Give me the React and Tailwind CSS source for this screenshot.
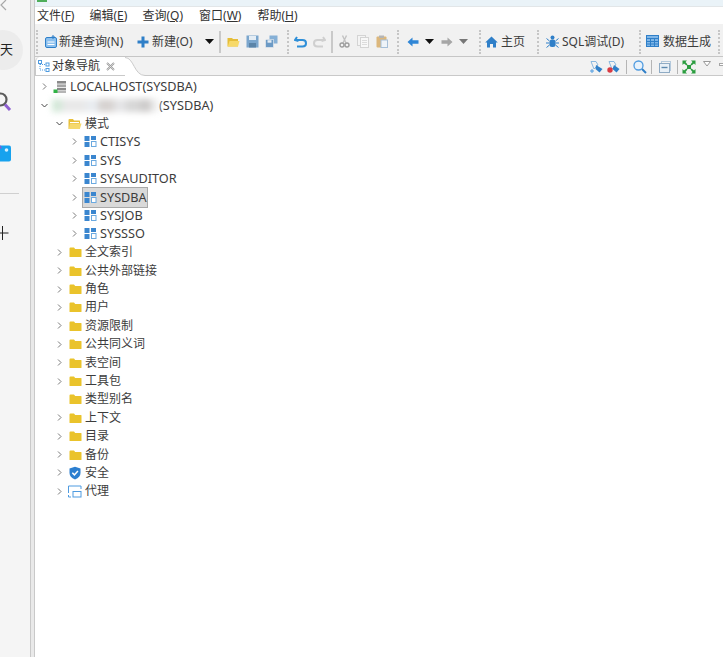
const F = ({ w = 14, h = 14, vb, children, cls = "" }) => (
  <svg width={w} height={h} viewBox={vb || `0 0 ${w} ${h}`} className={`shrink-0 ${cls}`}>{children}</svg>
);

const Chevron = ({ open }) => (
  <svg width="7" height="7" viewBox="0 0 7 7" className="shrink-0" fill="none" stroke="#7a7a7a" strokeWidth="1">
    {open ? <path d="M0.5 2 L3.5 5 L6.5 2" stroke="#444" /> : <path d="M2 0.5 L5 3.5 L2 6.5" />}
  </svg>
);

const Folder = () => (
  <F w={13} h={12}>
    <path d="M0.5 2.5 Q0.5 1.5 1.5 1.5 H5 L6.2 3 H12 Q12.5 3 12.5 3.5 V10.5 Q12.5 11 12 11 H1 Q0.5 11 0.5 10.5Z" fill="#eac32b" />
  </F>
);
const FolderOpen = () => (
  <F w={14} h={12}>
    <path d="M0.5 2 Q0.5 1 1.5 1 H5 L6 2.5 H11.5 Q12 2.5 12 3 V11 H1 Q0.5 11 0.5 10.5Z" fill="#e8bf3a" />
    <path d="M2 4 H11 V5 H2Z" fill="#fff" />
    <path d="M2 5.5 H13.5 L11.8 11 H0.8Z" fill="#f5d96e" />
  </F>
);
const Schema = () => (
  <F w={13} h={13}>
    <rect x="0.5" y="1" width="5" height="5" fill="#3a86cf" />
    <rect x="0.5" y="7" width="5" height="5" fill="#3a86cf" />
    <rect x="7" y="1" width="5" height="4" fill="#3a86cf" />
    <rect x="7.5" y="6.5" width="4.5" height="5" fill="#fff" stroke="#6aa9e0" />
  </F>
);
const Server = () => (
  <F w={14} h={14}>
    <rect x="4" y="1" width="9" height="2.6" fill="#8a8a8a" />
    <rect x="4" y="4.4" width="9" height="2.6" fill="#a5a5a5" />
    <rect x="4" y="7.8" width="9" height="2.6" fill="#8a8a8a" />
    <rect x="4" y="11" width="9" height="2" fill="#b5b5b5" />
    <rect x="0.5" y="9.5" width="4" height="3.5" fill="#2fb344" />
  </F>
);
const Shield = () => (
  <F w={12} h={14}>
    <path d="M6 0.8 L11.5 2.5 V7 Q11.5 11 6 13.5 Q0.5 11 0.5 7 V2.5Z" fill="#2c7fd0" />
    <path d="M3.3 6.8 L5.4 8.9 L8.9 4.9" fill="none" stroke="#fff" strokeWidth="1.5" />
  </F>
);
const Proxy = () => (
  <F w={14} h={13}>
    <path d="M0.5 8 V1 H13 V4" fill="none" stroke="#4f9be0" />
    <path d="M0.5 10 V12 H3" fill="none" stroke="#4f9be0" />
    <rect x="5" y="6.5" width="8" height="5.5" fill="#fff" stroke="#4f9be0" />
  </F>
);

const rows = [
  { icon: <Folder />, t: "全文索引" },
  { icon: <Folder />, t: "公共外部链接" },
  { icon: <Folder />, t: "角色" },
  { icon: <Folder />, t: "用户" },
  { icon: <Folder />, t: "资源限制" },
  { icon: <Folder />, t: "公共同义词" },
  { icon: <Folder />, t: "表空间" },
  { icon: <Folder />, t: "工具包" },
  { icon: <Folder />, t: "类型别名", noArrow: true },
  { icon: <Folder />, t: "上下文" },
  { icon: <Folder />, t: "目录" },
  { icon: <Folder />, t: "备份" },
  { icon: <Shield />, t: "安全" },
  { icon: <Proxy />, t: "代理" },
];

const Row = ({ pad, open, icon, noArrow, children }) => (
  <div className={`flex h-[18.4px] items-center ${pad}`}>
    <span className="flex w-[9px] shrink-0 justify-center">{!noArrow && <Chevron open={open} />}</span>
    <span className="relative z-10 ml-[4px] flex w-[14px] shrink-0 items-center justify-center">{icon}</span>
    {children}
  </div>
);

const Grip = ({ ml }) => <div className={`h-[24px] w-px shrink-0 border-l-2 border-dotted border-[#c6c6c6] ${ml}`} />;
const Sep = ({ ml }) => <div className={`h-[22px] w-[2px] shrink-0 bg-[#c9c9c9] ${ml}`} />;
const Drop = ({ ml, c = "#111" }) => (
  <svg width="9" height="5" viewBox="0 0 9 5" className={`shrink-0 ${ml}`}><path d="M0 0 H9 L4.5 5Z" fill={c} /></svg>
);

const Menu = ({ ml, t, k }) => (
  <span className={`${ml} whitespace-nowrap`}>
    {t}(<span className="underline underline-offset-1">{k}</span>)
  </span>
);

export default function App() {
  return (
    <div className="flex h-[657px] w-[723px] overflow-hidden bg-white font-['Noto_Sans','Noto_Sans_CJK_SC',sans-serif] text-[12px] text-[#3c3c3c]">
      {/* left app strip */}
      <div className="flex w-[30px] shrink-0 flex-col overflow-hidden bg-[#f5f5f5]">
        <svg width="10" height="12" viewBox="0 0 10 12" className="shrink-0" fill="none" stroke="#a8a8a8" strokeWidth="1.2">
          <path d="M6 0 L1 5 L6 10" />
        </svg>
        <div className="-ml-[17px] mt-[18px] flex h-[40px] w-[40px] shrink-0 items-center justify-end rounded-full bg-[#ececec] pr-[10px] text-[13px] text-[#222]">天</div>
        <svg width="16" height="22" viewBox="0 0 16 22" className="-ml-[3px] mt-[22px] shrink-0" fill="none">
          <circle cx="3.5" cy="7.5" r="6" stroke="#5b5b5b" strokeWidth="2.2" />
          <path d="M8 12.5 L13 18" stroke="#8e5fd0" strokeWidth="3" />
        </svg>
        <svg width="12" height="17" viewBox="0 0 12 17" className="mt-[31px] shrink-0">
          <rect x="-6" y="0.5" width="17" height="16" rx="2" fill="#17a2ee" />
          <circle cx="6.5" cy="5" r="1.8" fill="#d5efff" />
          <path d="M-6 1 L0 0 L2 3 L-6 6Z" fill="#7e5fd8" />
        </svg>
        <div className="mt-[31px] h-px w-[19px] shrink-0 bg-[#d0d0d0]" />
        <svg width="10" height="14" viewBox="0 0 10 14" className="mt-[32px] shrink-0" fill="none" stroke="#222">
          <path d="M0 7 H8.5 M2.5 0 V14" />
        </svg>
      </div>
      <div className="w-[5px] shrink-0 border-x border-x-[#c9c9c9] bg-[#e9e9e9]" />

      {/* main */}
      <div className="flex min-w-0 flex-1 flex-col">
        <div className="h-[7px] shrink-0 border-b border-[#e2e6e8] bg-[#eaf3f8]">
          <div className="ml-[2px] h-[2px] w-[10px] bg-[#4fae5a]" />
        </div>
        {/* menu */}
        <div className="flex h-[17px] shrink-0 items-center bg-white pl-[2px] text-[12px] leading-none text-[#333]">
          <Menu t="文件" k="F" />
          <Menu ml="ml-[15px]" t="编辑" k="E" />
          <Menu ml="ml-[15px]" t="查询" k="Q" />
          <Menu ml="ml-[16px]" t="窗口" k="W" />
          <Menu ml="ml-[16px]" t="帮助" k="H" />
        </div>
        {/* toolbar */}
        <div className="flex h-[33px] shrink-0 items-center overflow-hidden border-b border-[#c6c6c6] bg-[#f1f1f1] pl-[1px] pt-[3px] whitespace-nowrap">
          <Grip />
          <F w={12} h={13} cls="ml-[7px]">
            <rect x="0.5" y="2.5" width="11" height="10" rx="1.5" fill="#8cc0ee" stroke="#2f7fc8" />
            <path d="M8 0 V4 M6.5 2 H10" stroke="#2f7fc8" />
            <path d="M2.5 7 H9.5 M2.5 9.5 H9.5" stroke="#fff" />
          </F>
          <span className="ml-[2px] w-[65px]">新建查询(N)</span>
          <F w={12} h={12} cls="ml-[13px]">
            <path d="M6 0.5 V11.5 M0.5 6 H11.5" stroke="#2f7fc8" strokeWidth="3" />
          </F>
          <span className="ml-[3px] w-[42px]">新建(O)</span>
          <Drop ml="ml-[11px]" />
          <Sep ml="ml-[5px]" />
          <F w={13} h={12} cls="ml-[6px]">
            <path d="M0.5 2 H5 L6 3 H11 V10.5 H0.5Z" fill="#e5bd38" />
            <path d="M2.5 5 H12.5 L11 10.5 H0.8Z" fill="#f7d968" />
          </F>
          <F w={13} h={13} cls="ml-[6px]">
            <rect x="0.5" y="0.5" width="12" height="12" fill="#7ba6cd" />
            <rect x="3" y="1" width="7" height="4" fill="#e4edf5" />
            <rect x="3" y="8" width="7" height="4.5" fill="#5b84a8" />
          </F>
          <F w={13} h={13} cls="ml-[6px]">
            <rect x="4.5" y="0.5" width="8" height="8" fill="#86b0d6" />
            <rect x="0.5" y="4.5" width="8" height="8" fill="#6c9ac5" stroke="#f1f1f1" strokeWidth="0.6" />
            <rect x="2.5" y="5.2" width="4" height="2.5" fill="#e4edf5" />
          </F>
          <Grip ml="ml-[9px]" />
          <F w={13} h={12} cls="ml-[5px]">
            <path d="M3 1 L1 4 L4.5 5 M1.5 4 H8.5 Q12 4 12 7.2 Q12 10.5 8.5 10.5 H3" fill="none" stroke="#2f8fd8" strokeWidth="2" />
          </F>
          <F w={13} h={12} cls="ml-[6px]">
            <path d="M10 1 L12 4 L8.5 5 M11.5 4 H4.5 Q1 4 1 7.2 Q1 10.5 4.5 10.5 H10" fill="none" stroke="#cfcfcf" strokeWidth="2" />
          </F>
          <Sep ml="ml-[5px]" />
          <F w={11} h={13} cls="ml-[6px]">
            <path d="M7.5 0.5 L4 8 M3.5 0.5 L7 8" stroke="#c2c2c2" strokeWidth="1.4" />
            <circle cx="3" cy="10" r="2" fill="none" stroke="#9d9d9d" strokeWidth="1.4" />
            <circle cx="8" cy="10" r="2" fill="none" stroke="#9d9d9d" strokeWidth="1.4" />
          </F>
          <F w={12} h={13} cls="ml-[7px]">
            <rect x="0.5" y="0.5" width="8" height="10" fill="#f4f4f4" stroke="#d4d4d4" />
            <rect x="3.5" y="2.5" width="8" height="10" fill="#f8f8f8" stroke="#d4d4d4" />
            <path d="M5 5.5 H10 M5 7.5 H10 M5 9.5 H10" stroke="#dcdcdc" />
          </F>
          <F w={12} h={13} cls="ml-[7px]">
            <rect x="0.5" y="1.5" width="10" height="11" rx="1" fill="#dcb77c" />
            <rect x="3" y="0.5" width="5" height="2.5" fill="#b5b5b5" />
            <rect x="5" y="5" width="6.5" height="7.5" fill="#eef3f8" stroke="#a6bfd8" />
          </F>
          <Grip ml="ml-[9px]" />
          <F w={12} h={10} cls="ml-[8px]">
            <path d="M5.5 0.5 L0.5 5 L5.5 9.5 V6.8 H11.5 V3.2 H5.5Z" fill="#2f86d6" />
          </F>
          <Drop ml="ml-[6px]" />
          <F w={12} h={10} cls="ml-[7px]">
            <path d="M6.5 0.5 L11.5 5 L6.5 9.5 V6.8 H0.5 V3.2 H6.5Z" fill="#a6a6a6" />
          </F>
          <Drop ml="ml-[6px]" c="#777" />
          <Grip ml="ml-[11px]" />
          <F w={13} h={12} cls="ml-[4px]">
            <path d="M6.5 0.5 L12.8 6.5 H11 V11.5 H8 V8 H5 V11.5 H2 V6.5 H0.2Z" fill="#2f7fc8" />
          </F>
          <span className="ml-[3px] w-[24px]">主页</span>
          <Grip ml="ml-[12px]" />
          <F w={13} h={13} cls="ml-[7px]">
            <circle cx="6.5" cy="2.5" r="2" fill="#2f7fc8" />
            <rect x="3.5" y="4.5" width="6" height="7.5" rx="2.5" fill="#2f7fc8" />
            <path d="M0.5 3.5 L3.5 6 M12.5 3.5 L9.5 6 M0 8 H3.5 M13 8 H9.5 M0.5 12.5 L3.5 10 M12.5 12.5 L9.5 10" stroke="#2f7fc8" />
          </F>
          <span className="ml-[3px] w-[65px]">SQL调试(D)</span>
          <Grip ml="ml-[12px]" />
          <F w={13} h={13} cls="ml-[5px]">
            <rect x="0.5" y="0.5" width="12" height="11" fill="#7fb6e8" stroke="#2f7fc8" />
            <path d="M0.5 3.5 H12.5 M0.5 6.5 H12.5 M0.5 9 H12.5 M4.5 3.5 V11.5 M8.5 3.5 V11.5" stroke="#2f7fc8" />
          </F>
          <span className="ml-[4px] w-[48px]">数据生成</span>
          <Grip ml="ml-[7px]" />
        </div>
        {/* view tab bar */}
        <div className="flex h-[19px] shrink-0 items-stretch justify-between border-b border-[#c9c9c9] bg-[#f2f2f2]">
          <div className="relative flex w-[90px] items-center rounded-tl-[5px] border-l border-[#c9c9c9] bg-white pl-[2px]">
            <F w={12} h={12}>
              <rect x="0.5" y="0.5" width="3" height="3" fill="none" stroke="#4f9be0" />
              <rect x="8" y="3" width="3" height="3" fill="none" stroke="#4f9be0" />
              <rect x="8" y="8.5" width="3" height="3" fill="none" stroke="#4f9be0" />
              <path d="M2 4 V10 H8 M2 4.5 H8" fill="none" stroke="#4f9be0" strokeDasharray="1 1" />
            </F>
            <span className="ml-[2px] text-[12px] text-[#333]">对象导航</span>
            <F w={9} h={9} cls="ml-[6px]">
              <path d="M1 1 L8 8 M8 1 L1 8" stroke="#9a9a9a" strokeWidth="1.8" />
              <path d="M1 1 L8 8 M8 1 L1 8" stroke="#f2f2f2" strokeWidth="0.6" />
            </F>
            <svg width="20" height="19" viewBox="0 0 20 19" className="absolute -right-[20px] top-0">
              <path d="M0 0 C9 0 9 18 20 18 V19 H0Z" fill="#fff" />
              <path d="M0 0.5 C9 0.5 9 18.5 20 18.5" fill="none" stroke="#c9c9c9" />
            </svg>
          </div>
          <div className="-mr-[3px] flex items-center overflow-hidden pt-px">
            <F w={13} h={13}>
              <path d="M1 1.5 H6 L8 5 L4 9 Z" fill="none" stroke="#8ab8df" />
              <path d="M6 5 L12.5 9 L9.5 12.5 L5.5 9Z" fill="#2f7fc8" />
              <path d="M0 11 H4 M2 9 V13" stroke="#4f9be0" />
            </F>
            <F w={13} h={13} cls="ml-[4px]">
              <path d="M2 1.5 H7 L9 5 L5 9 Z" fill="none" stroke="#8ab8df" />
              <path d="M7 5 L12.5 9 L9.5 12.5 L5.5 9Z" fill="#2f7fc8" />
              <circle cx="3" cy="10" r="2.7" fill="#d93a42" />
            </F>
            <div className="ml-[6px] h-[14px] w-px bg-[#b5b5b5]" />
            <F w={14} h={14} cls="ml-[6px]">
              <circle cx="5.5" cy="5.5" r="4.5" fill="#e8f2fb" stroke="#4f9be0" strokeWidth="1.3" />
              <path d="M9 9 L13 13" stroke="#2f7fc8" strokeWidth="2" />
            </F>
            <div className="ml-[4px] h-[14px] w-px bg-[#b5b5b5]" />
            <F w={12} h={12} cls="ml-[7px]">
              <rect x="2.5" y="0.5" width="9" height="9" fill="none" stroke="#b4c9dc" />
              <rect x="0.5" y="2.5" width="10" height="9" fill="#e8f0f7" stroke="#8fabc4" />
              <path d="M2.5 6.5 H8.5" stroke="#5d88ae" strokeWidth="1.4" />
            </F>
            <div className="ml-[6px] h-[14px] w-px bg-[#b5b5b5]" />
            <F w={14} h={14} cls="ml-[4px]">
              <path d="M0.5 0.5 H5 L3.5 2 L5.5 4.5 L4.5 5.5 L2 3.5 L0.5 5Z M13.5 0.5 H9 L10.5 2 L8.5 4.5 L9.5 5.5 L12 3.5 L13.5 5Z M0.5 13.5 H5 L3.5 12 L5.5 9.5 L4.5 8.5 L2 10.5 L0.5 9Z M13.5 13.5 H9 L10.5 12 L8.5 9.5 L9.5 8.5 L12 10.5 L13.5 9Z" fill="#2a9d3f" />
              <rect x="5" y="5" width="4" height="4" fill="#2a9d3f" />
            </F>
            <svg width="8" height="6" viewBox="0 0 8 6" className="mb-[6px] ml-[7px] shrink-0"><path d="M0.5 0.5 H7.5 L4 5Z" fill="#fff" stroke="#9a9a9a" /></svg>
            <div className="mb-[5px] ml-[8px] h-[3px] w-[7px] shrink-0 border border-[#a5a5a5] bg-white" />
          </div>
        </div>
        {/* tree */}
        <div className="flex-1 bg-white pt-[1.6px] text-[12px] text-[#3c3c3c]">
          <Row pad="pl-[5px]" icon={<Server />}>
            <span className="ml-[3px] text-[12.7px]">LOCALHOST(SYSDBA)</span>
          </Row>
          <Row pad="pl-[5px]" open icon={null}>
            <div className="-ml-[15px] flex h-[13px] w-[107px] shrink-0 blur-[3px]">
              <div className="h-full w-[10px] bg-[#d3e8d8]" />
              <div className="h-full w-[24px] bg-[#e8e8e8]" />
              <div className="h-full w-[12px] bg-[#e8ecf0]" />
              <div className="h-full w-[16px] bg-[#d6d2d0]" />
              <div className="h-full w-[12px] bg-[#e4e4e6]" />
              <div className="h-full w-[14px] bg-[#d6d6d6]" />
              <div className="h-full w-[11px] bg-[#cdcbca]" />
              <div className="h-full w-[8px] bg-[#eeeeee]" />
            </div>
            <span className="text-[12.7px]">(SYSDBA)</span>
          </Row>
          <Row pad="pl-[20px]" open icon={<FolderOpen />}>
            <span className="ml-[3px]">模式</span>
          </Row>
          {["CTISYS", "SYS", "SYSAUDITOR", "SYSDBA", "SYSJOB", "SYSSSO"].map((t) => (
            <Row key={t} pad="pl-[35px]" icon={<Schema />}>
              {t === "SYSDBA" ? (
                <span className="relative ml-[3px] text-[12.7px]">
                  <span className="absolute -inset-y-px -left-[18px] -right-px border border-[#a9a9a9] bg-[#d9d9d9]" />
                  <span className="relative">{t}</span>
                </span>
              ) : (
                <span className="ml-[3px] text-[12.7px]">{t}</span>
              )}
            </Row>
          ))}
          {rows.map((r) => (
            <Row key={r.t} pad="pl-[20px]" icon={r.icon} noArrow={r.noArrow}>
              <span className="ml-[3px]">{r.t}</span>
            </Row>
          ))}
        </div>
      </div>
    </div>
  );
}
